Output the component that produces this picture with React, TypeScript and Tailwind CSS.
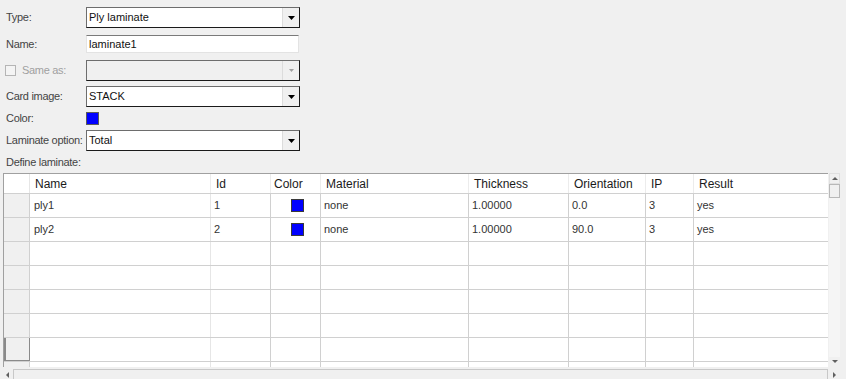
import React from 'react';

const COLS = [
  { key: 'name', label: 'Name', w: 181 },
  { key: 'id', label: 'Id', w: 60 },
  { key: 'color', label: 'Color', w: 50 },
  { key: 'material', label: 'Material', w: 148 },
  { key: 'thickness', label: 'Thickness', w: 100 },
  { key: 'orientation', label: 'Orientation', w: 77 },
  { key: 'ip', label: 'IP', w: 48 },
  { key: 'result', label: 'Result', w: 136 },
];

const GRID = 'grid grid-cols-[26px_181px_60px_50px_148px_100px_77px_48px_136px]';

const plies = [
  { name: 'ply1', id: '1', material: 'none', thickness: '1.00000', orientation: '0.0', ip: '3', result: 'yes' },
  { name: 'ply2', id: '2', material: 'none', thickness: '1.00000', orientation: '90.0', ip: '3', result: 'yes' },
];

const Arrow: React.FC<{ dir: 'up' | 'down' | 'left' | 'right'; color?: string }> = ({ dir, color = '#606060' }) => {
  const pts = {
    up: '1,5 4,2 7,5',
    down: '1,2 4,5 7,2',
    left: '5,1 2,4 5,7',
    right: '2,1 5,4 2,7',
  }[dir];
  return (
    <svg width="8" height="8" viewBox="0 0 8 8">
      <polygon points={pts} fill={color} />
    </svg>
  );
};

const Combo: React.FC<{ value?: string }> = ({ value }) => (
  <div className="flex w-[214px] h-[21px] bg-white border border-t-[#6d6d6d] border-l-[#6d6d6d] border-r-[#1a1a1a] border-b-[#1a1a1a]">
    <div className="flex-1 flex items-center pl-[2px] text-[11px] text-[#111]">{value}</div>
    <div className="w-[17px] flex items-center justify-center bg-[#f0f0f0] border-l border-[#dcdcdc]">
      <svg width="7" height="4" viewBox="0 0 7 4">
        <polygon points="0,0 7,0 3.5,4" fill="#000" />
      </svg>
    </div>
  </div>
);

const Label: React.FC<{ children: React.ReactNode }> = ({ children }) => (
  <div className="w-[86px] shrink-0 pl-[6px] text-[11px] tracking-[-0.3px] text-[#444] whitespace-nowrap">{children}</div>
);

export default function App() {
  return (
    <div
      className="w-[846px] h-[379px] bg-[#f0f0f0] overflow-hidden flex flex-col"
      style={{ fontFamily: '"Liberation Sans", Arial, sans-serif' }}
    >
      <div className="flex flex-col pt-[7px]">
        <div className="flex items-center h-[21px]">
          <Label>Type:</Label>
          <Combo value="Ply laminate" />
        </div>
        <div className="flex items-center h-[18px] mt-[7px]">
          <Label>Name:</Label>
          <div className="w-[213px] h-[18px] bg-white border border-[#e3e3e3] border-t-[#7a7a7a] flex items-center pl-[2px] text-[11px] text-[#111]">
            laminate1
          </div>
        </div>
        <div className="flex items-center h-[21px] mt-[7px]">
          <div className="w-[86px] shrink-0 pl-[5px] flex items-center gap-[6px] text-[11px] tracking-[-0.3px] text-[#a0a0a0]">
            <div className="w-[11px] h-[11px] bg-[#f4f4f4] border border-[#b5b5b5]" />
            Same as:
          </div>
          <div className="flex w-[214px] h-[21px] bg-[#f0f0f0] border border-t-[#6d6d6d] border-l-[#6d6d6d] border-r-[#1a1a1a] border-b-[#1a1a1a]">
            <div className="flex-1" />
            <div className="w-[17px] flex items-center justify-center border-l border-[#dcdcdc]">
              <svg width="5" height="3" viewBox="0 0 5 3">
                <polygon points="0,0 5,0 2.5,3" fill="#a0a0a0" />
              </svg>
            </div>
          </div>
        </div>
        <div className="flex items-center h-[21px] mt-[5px]">
          <Label>Card image:</Label>
          <Combo value="STACK" />
        </div>
        <div className="flex items-center h-[13px] mt-[5px]">
          <Label>Color:</Label>
          <div className="w-[13px] h-[13px] bg-[#0000ff] border border-[#5a5a5a]" />
        </div>
        <div className="flex items-center h-[21px] mt-[5px]">
          <Label>Laminate option:</Label>
          <Combo value="Total" />
        </div>
        <div className="h-[16px] mt-[3px] pl-[6px] text-[11px] tracking-[-0.3px] text-[#444] flex items-center">Define laminate:</div>
      </div>

      <div className="ml-[3px] mt-[3px] flex flex-col w-[837px]">
        <div className="flex h-[194px]">
          <div className="w-[826px] bg-white border-t border-l border-[#a0a0a0] overflow-hidden">
            <div className={`${GRID} h-[20px] border-b border-[#d0d0d0]`}>
              <div className="bg-white border-r border-[#e6e6e6]" />
              {COLS.map((c) => (
                <div
                  key={c.key}
                  className={`flex items-center text-[12px] text-[#1a1a1a] border-r border-[#ececec] ${c.key === 'color' ? 'pl-[3px]' : 'pl-[5px]'}`}
                >
                  {c.label}
                </div>
              ))}
            </div>
            {Array.from({ length: 8 }).map((_, i) => {
              const p = plies[i];
              return (
                <div key={i} className={`${GRID} h-[24px] border-b border-[#d0d0d0]`}>
                  <div
                    className={
                      i === 6
                        ? 'bg-[#f0f0f0] border-l-2 border-b border-r border-[#8a8a8a]'
                        : 'bg-[#f0f0f0] border-r border-[#d0d0d0]'
                    }
                  />
                  {COLS.map((c) => (
                    <div
                      key={c.key}
                      className={`flex items-center text-[11px] text-[#333] border-r ${c.key === 'name' ? 'border-[#e6e6e6] pl-[4px]' : 'border-[#d0d0d0] pl-[3px]'} ${c.key === 'color' ? 'justify-end pr-[16px]' : ''}`}
                    >
                      {p && c.key === 'color' && <div className="w-[13px] h-[13px] bg-[#0000ff] border border-[#3a3a3a]" />}
                      {p && c.key !== 'color' && (p as Record<string, string>)[c.key]}
                    </div>
                  ))}
                </div>
              );
            })}
          </div>
          <div className="w-[11px] ml-[1px] flex flex-col bg-[#f0f0f0]">
            <div className="h-[11px] flex items-center justify-center border border-[#e0e0e0] bg-[#f0f0f0]">
              <Arrow dir="up" />
            </div>
            <div className="h-[14px] bg-[#f0f0f0] border border-[#b8b8b8]" />
            <div className="flex-1 bg-[#f5f5f5]" />
            <div className="h-[10px] flex items-center justify-center">
              <Arrow dir="down" />
            </div>
          </div>
        </div>
        <div className="flex h-[11px] mt-[2px]">
          <div className="w-[10px] flex items-center justify-center">
            <Arrow dir="left" />
          </div>
          <div className="w-[816px] border border-[#c8c8c8] bg-[#f0f0f0]" />
          <div className="w-[11px] ml-[1px] flex items-center justify-center">
            <Arrow dir="right" />
          </div>
        </div>
      </div>
    </div>
  );
}
